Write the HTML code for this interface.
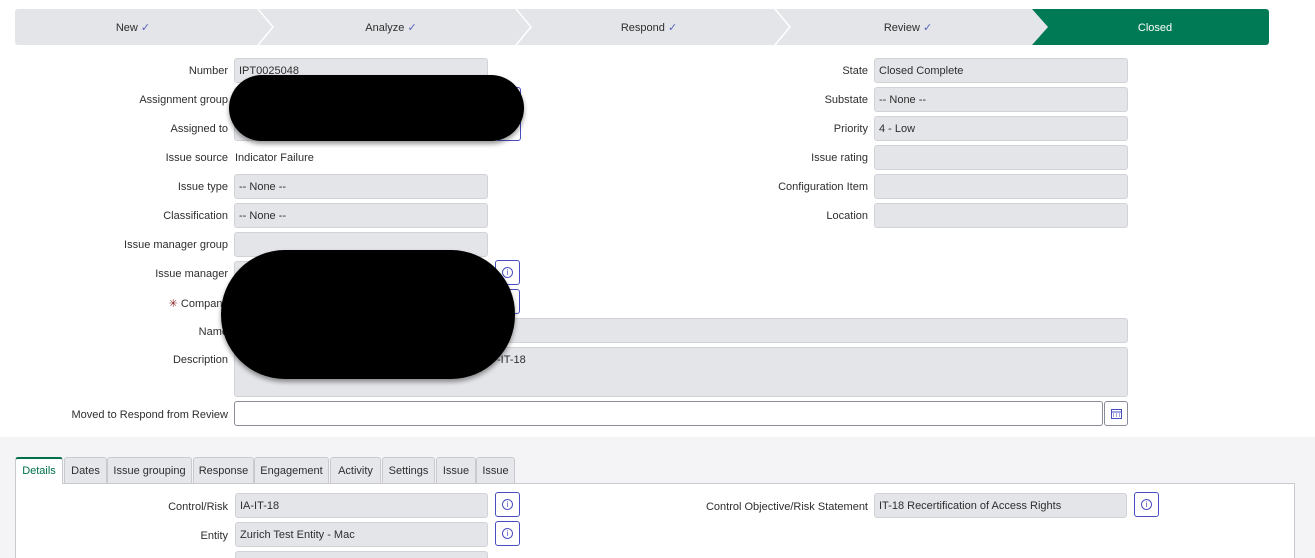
<!DOCTYPE html>
<html style="overflow:hidden;height:558px"><head><style>
html,body{margin:0;width:1315px;height:558px;overflow:hidden}
body{background:#fff;font-family:"Liberation Sans",sans-serif;font-size:11px;color:#2e2e2e;position:relative}
.a{position:absolute}
.lbl{position:absolute;text-align:right;white-space:nowrap}
.inp{position:absolute;background:#e4e5e9;border:1px solid #d2d3d8;border-radius:3px;box-sizing:border-box;height:25px;padding:6px 4px;white-space:nowrap;overflow:hidden}
.btn{position:absolute;width:25px;height:25px;box-sizing:border-box;border:1px solid #4a4dc0;border-radius:3px;background:#fff}
.btn i{position:absolute;left:6px;top:6px;width:11px;height:11px;border:1px solid #4a4dc0;border-radius:50%;box-sizing:border-box;font-style:normal;font-size:8px;color:#4a4dc0;text-align:center;line-height:9px}
.tab{position:absolute;top:457px;height:26px;box-sizing:border-box;border:1px solid #c9cad0;border-bottom:none;background:#e6e7eb;padding:7px 0 0 0;text-align:center;white-space:nowrap;border-radius:3px 3px 0 0}
</style></head><body>
<svg class="a" style="left:15px;top:9px" width="1255" height="37">
<rect x="0" y="0" width="1254" height="36" rx="3" fill="#e4e5e9"/>
<polyline points="243,0 258,18 243,36" fill="none" stroke="#fff" stroke-width="1.5"/>
<polyline points="501,0 516,18 501,36" fill="none" stroke="#fff" stroke-width="1.5"/>
<polyline points="760,0 775,18 760,36" fill="none" stroke="#fff" stroke-width="1.5"/>
<path d="M1017,0 H1251 a3,3 0 0 1 3,3 V33 a3,3 0 0 1 -3,3 H1017 L1033,18 Z" fill="#007a55"/>
<text x="118" y="22" font-size="11" text-anchor="middle" fill="#2e2e2e">New <tspan fill="#5a63b8">✓</tspan></text>
<text x="376" y="22" font-size="11" text-anchor="middle" fill="#2e2e2e">Analyze <tspan fill="#5a63b8">✓</tspan></text>
<text x="634" y="22" font-size="11" text-anchor="middle" fill="#2e2e2e">Respond <tspan fill="#5a63b8">✓</tspan></text>
<text x="893" y="22" font-size="11" text-anchor="middle" fill="#2e2e2e">Review <tspan fill="#5a63b8">✓</tspan></text>
<text x="1140" y="22" font-size="11" text-anchor="middle" fill="#fff">Closed</text>
</svg>

<div class="lbl" style="right:1087px;top:65px">Number</div><div class="inp" style="left:234px;top:58px;width:254px">IPT0025048</div>
<div class="lbl" style="right:1087px;top:94px">Assignment group</div><div class="inp" style="left:234px;top:87px;width:254px"></div><div class="btn" style="left:496px;top:87px"></div>
<div class="lbl" style="right:1087px;top:123px">Assigned to</div><div class="inp" style="left:234px;top:116px;width:254px"></div><div class="btn" style="left:496px;top:116px"></div>
<div class="lbl" style="right:1087px;top:152px">Issue source</div><div class="a" style="left:235px;top:152px">Indicator Failure</div>
<div class="lbl" style="right:1087px;top:181px">Issue type</div><div class="inp" style="left:234px;top:174px;width:254px">-- None --</div>
<div class="lbl" style="right:1087px;top:210px">Classification</div><div class="inp" style="left:234px;top:203px;width:254px">-- None --</div>
<div class="lbl" style="right:1087px;top:239px">Issue manager group</div><div class="inp" style="left:234px;top:232px;width:254px"></div>
<div class="lbl" style="right:1087px;top:268px">Issue manager</div><div class="inp" style="left:234px;top:261px;width:254px"></div><div class="btn" style="left:495px;top:260px"><i>i</i></div>
<div class="lbl" style="right:1087px;top:297px"><span style="color:#8a2a2a">✳</span> Company</div><div class="inp" style="left:234px;top:290px;width:254px"></div><div class="btn" style="left:495px;top:289px"></div>
<div class="lbl" style="right:1087px;top:326px">Name</div><div class="inp" style="left:234px;top:318px;width:894px"></div>
<div class="lbl" style="right:1087px;top:354px">Description</div><div class="inp" style="left:234px;top:347px;width:894px;height:50px"><span style="margin-left:258px">-IT-18</span></div>
<div class="lbl" style="right:1087px;top:409px">Moved to Respond from Review</div>
<div class="a" style="left:234px;top:401px;width:869px;height:25px;border:1px solid #8a8d99;border-radius:3px;box-sizing:border-box;background:#fff"></div>
<div class="btn" style="left:1104px;top:401px;width:24px;border-color:#8a8d99"><svg class="a" style="left:6px;top:6px" width="11" height="11"><rect x="0.5" y="1.5" width="10" height="9" fill="none" stroke="#4a4dc0"/><line x1="0" y1="4" x2="11" y2="4" stroke="#4a4dc0"/><path d="M2 6h1M5 6h1M8 6h1M2 8h1M5 8h1M8 8h1" stroke="#4a4dc0"/></svg></div>

<div class="lbl" style="right:447px;top:65px">State</div><div class="inp" style="left:874px;top:58px;width:254px">Closed Complete</div>
<div class="lbl" style="right:447px;top:94px">Substate</div><div class="inp" style="left:874px;top:87px;width:254px">-- None --</div>
<div class="lbl" style="right:447px;top:123px">Priority</div><div class="inp" style="left:874px;top:116px;width:254px">4 - Low</div>
<div class="lbl" style="right:447px;top:152px">Issue rating</div><div class="inp" style="left:874px;top:145px;width:254px"></div>
<div class="lbl" style="right:447px;top:181px">Configuration Item</div><div class="inp" style="left:874px;top:174px;width:254px"></div>
<div class="lbl" style="right:447px;top:210px">Location</div><div class="inp" style="left:874px;top:203px;width:254px"></div>

<div class="a" style="left:229px;top:75px;width:295px;height:66px;border-radius:33px;background:#000;box-shadow:0 3px 5px rgba(0,0,0,.4)"></div>
<div class="a" style="left:221px;top:250px;width:294px;height:129px;border-radius:64px;background:#000;box-shadow:0 3px 5px rgba(0,0,0,.4)"></div>

<div class="a" style="left:0;top:437px;width:1315px;height:121px;background:#f4f4f6"></div>
<div class="a" style="left:15px;top:483px;width:1280px;height:75px;background:#fff;border:1px solid #c9cad0;border-bottom:none;box-sizing:border-box"></div>
<div class="tab" style="left:15px;width:48px;background:#fff;color:#00704a;border-top:2px solid #00704a;height:27px;padding-top:6px">Details</div>
<div class="tab" style="left:64px;width:43px">Dates</div>
<div class="tab" style="left:107px;width:85px">Issue grouping</div>
<div class="tab" style="left:193px;width:61px">Response</div>
<div class="tab" style="left:254px;width:75px">Engagement</div>
<div class="tab" style="left:330px;width:51px">Activity</div>
<div class="tab" style="left:382px;width:53px">Settings</div>
<div class="tab" style="left:436px;width:40px">Issue</div>
<div class="tab" style="left:476px;width:39px">Issue</div>

<div class="lbl" style="right:1087px;top:501px">Control/Risk</div><div class="inp" style="left:235px;top:493px;width:253px">IA-IT-18</div><div class="btn" style="left:495px;top:492px"><i>i</i></div>
<div class="lbl" style="right:1087px;top:530px">Entity</div><div class="inp" style="left:235px;top:522px;width:253px">Zurich Test Entity - Mac</div><div class="btn" style="left:495px;top:521px"><i>i</i></div>
<div class="inp" style="left:235px;top:551px;width:253px;height:7px;border-bottom:none;border-radius:3px 3px 0 0"></div>
<div class="lbl" style="right:447px;top:501px">Control Objective/Risk Statement</div><div class="inp" style="left:874px;top:493px;width:253px">IT-18 Recertification of Access Rights</div><div class="btn" style="left:1134px;top:492px"><i>i</i></div>
</body></html>
